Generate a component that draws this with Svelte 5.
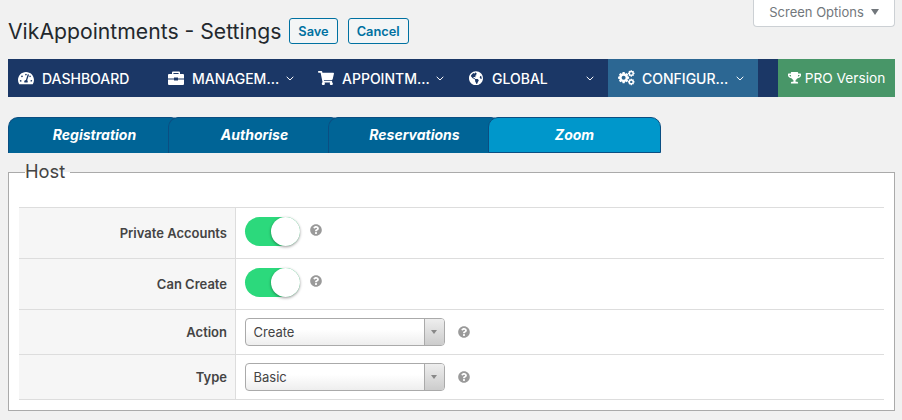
<script>
	const gear = (cx, cy, r, teeth = 8) => {
		let d = '';
		const step = (Math.PI * 2) / teeth;
		for (let i = 0; i < teeth; i++) {
			const a = i * step;
			const pts = [
				[-0.3, r * 0.78], [-0.16, r], [0.16, r], [0.3, r * 0.78]
			];
			pts.forEach(([o, rad], j) => {
				const x = cx + Math.cos(a + o * step * 1.4) * rad;
				const y = cy + Math.sin(a + o * step * 1.4) * rad;
				d += `${i === 0 && j === 0 ? 'M' : 'L'}${x.toFixed(2)} ${y.toFixed(2)}`;
			});
		}
		d += 'Z';
		const h = r * 0.36;
		d += `M${cx - h} ${cy}a${h} ${h} 0 1 0 ${h * 2} 0a${h} ${h} 0 1 0 ${-h * 2} 0Z`;
		return d;
	};

	const icons = {
		dashboard: { box: '0 0 576 512', d: 'M288 32C128.94 32 0 160.94 0 320c0 52.8 14.25 102.26 39.06 144.8 5.61 9.62 16.3 15.2 27.44 15.2h443c11.14 0 21.83-5.58 27.44-15.2C561.75 422.26 576 372.8 576 320c0-159.06-128.94-288-288-288zm0 64c14.71 0 26.58 10.13 30.32 23.65-1.11 2.26-2.64 4.23-3.45 6.67l-9.22 27.67c-5.13 3.49-10.97 6.01-17.64 6.01-17.67 0-32-14.33-32-32S270.33 96 288 96zM96 384c-17.67 0-32-14.33-32-32s14.33-32 32-32 32 14.33 32 32-14.33 32-32 32zm48-160c-17.67 0-32-14.33-32-32s14.33-32 32-32 32 14.33 32 32-14.33 32-32 32zm246.77-72.41l-61.33 184C343.13 347.33 352 364.54 352 384c0 11.72-3.38 22.55-8.88 32H232.88c-5.5-9.45-8.88-20.28-8.88-32 0-33.94 26.5-61.43 59.9-63.59l61.34-184.01c4.17-12.56 17.73-19.45 30.36-15.17 12.57 4.19 19.35 17.79 15.17 30.36zm14.66 57.2l15.52-46.55c3.47-1.29 7.13-2.23 11.05-2.23 17.67 0 32 14.33 32 32s-14.33 32-32 32c-11.38-.01-20.89-6.28-26.57-15.22zM480 384c-17.67 0-32-14.33-32-32s14.33-32 32-32 32 14.33 32 32-14.33 32-32 32z' },
		briefcase: { box: '0 0 16 14', d: 'M5 0.5h6a1 1 0 0 1 1 1V3h3a1 1 0 0 1 1 1v3.4H10V6.6H6v.8H0V4a1 1 0 0 1 1-1h3V1.5a1 1 0 0 1 1-1zM5.4 1.9V3h5.2V1.9zM0 8.4h6v1.2h4V8.4h6V13a1 1 0 0 1-1 1H1a1 1 0 0 1-1-1z' },
		cart: { box: '0 0 576 512', d: 'M528.12 301.319l47.273-208C578.806 78.301 567.391 64 551.99 64H159.208l-9.166-44.81C147.758 8.021 137.93 0 126.529 0H24C10.745 0 0 10.745 0 24v16c0 13.255 10.745 24 24 24h69.883l70.248 343.435C147.325 417.1 136 435.222 136 456c0 30.928 25.072 56 56 56s56-25.072 56-56c0-15.674-6.447-29.835-16.824-40h209.647C430.447 426.165 424 440.326 424 456c0 30.928 25.072 56 56 56s56-25.072 56-56c0-22.172-12.888-41.332-31.579-50.405l5.517-24.276c3.413-15.018-8.002-29.319-23.403-29.319H218.117l-6.545-32h293.145c11.206 0 20.92-7.754 23.403-18.681z' },
		globe: { box: '0 0 496 512', d: 'M248 8C111.03 8 0 119.03 0 256s111.03 248 248 248 248-111.03 248-248S384.97 8 248 8zm82.29 357.6c-3.9 3.88-7.99 7.95-11.31 11.28-2.99 3-5.1 6.7-6.17 10.71-1.51 5.66-2.73 11.38-4.77 16.87l-17.39 46.85c-13.76 3-28 4.69-42.65 4.69v-27.38c1.69-12.62-7.64-36.26-22.63-51.25-6-6-9.37-14.14-9.37-22.63v-32.01c0-11.64-6.27-22.34-16.46-27.97-14.37-7.95-34.81-19.06-48.81-26.11-11.48-5.78-22.1-13.14-31.65-21.75l-.8-.72a114.792 114.792 0 0 1-18.06-20.74c-9.38-13.77-24.66-36.42-34.59-51.14 20.47-45.5 57.36-82.04 103.2-101.89l24.01 12.01C203.48 89.74 216 82.01 216 70.11v-11.3c7.99-1.29 16.12-2.11 24.39-2.42l28.3 28.3c6.25 6.25 6.25 16.38 0 22.63L264 112l-10.34 10.34c-3.12 3.12-3.12 8.19 0 11.31l4.69 4.69c3.12 3.12 3.12 8.19 0 11.31l-8 8a8.008 8.008 0 0 1-5.66 2.34h-8.99c-2.08 0-4.08.81-5.58 2.27l-9.92 9.65a8.008 8.008 0 0 0-1.58 9.31l15.59 31.19c2.66 5.32-1.21 11.58-7.15 11.58h-5.64c-1.93 0-3.79-.7-5.24-1.96l-9.28-8.06a16.017 16.017 0 0 0-15.55-3.1l-31.17 10.39a11.95 11.95 0 0 0-8.17 11.34c0 4.53 2.56 8.66 6.61 10.69l11.08 5.54c9.41 4.71 19.79 7.16 30.31 7.16s22.59 27.29 32 32h66.75c8.49 0 16.62 3.37 22.63 9.37l13.69 13.69a30.503 30.503 0 0 1 8.93 21.57 46.536 46.536 0 0 1-13.72 32.98zM417 274.25c-5.79-1.45-10.84-5-14.15-9.97l-17.98-26.97a23.97 23.97 0 0 1 0-26.62l19.59-29.38c2.32-3.47 5.5-6.29 9.24-8.15l12.98-6.49C440.2 193.59 448 223.87 448 256c0 8.67-.74 17.16-1.82 25.54L417 274.25z' },
		cogs: { box: '0 0 20 18', d: gear(6.6, 9, 6.6, 8) + gear(15.6, 4, 3.9, 8) + gear(15.6, 14, 3.9, 8), rule: 'evenodd' }
	};

	const trophy = 'M552 64H448V24c0-13.3-10.7-24-24-24H152c-13.3 0-24 10.7-24 24v40H24C10.7 64 0 74.7 0 88v56c0 35.7 22.5 72.4 61.9 100.7 31.5 22.7 69.8 37.1 110 41.7C203.3 338.5 240 360 240 360v72h-48c-35.3 0-64 20.7-64 56v12c0 6.6 5.4 12 12 12h296c6.6 0 12-5.4 12-12v-12c0-35.3-28.7-56-64-56h-48v-72s36.7-21.5 68.1-73.6c40.3-4.6 78.6-19 110-41.7 39.3-28.3 61.9-65 61.9-100.7V88c0-13.3-10.7-24-24-24zM99.3 192.8C74.9 175.2 64 155.6 64 144v-16h64.2c1 32.6 5.8 61.2 12.8 86.2-15.1-5.2-29.2-12.4-41.7-21.4zM512 144c0 16.1-17.7 36.1-35.3 48.8-12.5 9-26.7 16.2-41.8 21.4 7-25 11.8-53.6 12.8-86.2H512v16z';
	const question = 'M504 256c0 136.997-111.043 248-248 248S8 392.997 8 256C8 119.083 119.043 8 256 8s248 111.083 248 248zM262.655 90c-54.497 0-89.255 22.957-116.549 63.758-3.536 5.286-2.353 12.415 2.715 16.258l34.699 26.31c5.205 3.947 12.621 3.008 16.665-2.122 17.864-22.658 30.113-35.797 57.303-35.797 20.429 0 45.698 13.148 45.698 32.958 0 14.976-12.363 22.667-32.534 33.976C247.128 238.528 216 254.941 216 296v4c0 6.627 5.373 12 12 12h56c6.627 0 12-5.373 12-12v-1.333c0-28.462 83.186-29.647 83.186-106.667 0-58.002-60.165-102-116.531-102zM256 338c-25.365 0-46 20.635-46 46 0 25.364 20.635 46 46 46s46-20.636 46-46c0-25.365-20.635-46-46-46z';

	const menu = [
		{ label: 'DASHBOARD', icon: 'dashboard', w: 16 },
		{ label: 'MANAGEM…', icon: 'briefcase', w: 16, arrow: true },
		{ label: 'APPOINTM…', icon: 'cart', w: 16, arrow: true },
		{ label: 'GLOBAL', icon: 'globe', w: 14, arrow: true },
		{ label: 'CONFIGUR…', icon: 'cogs', w: 17, arrow: true, active: true }
	];

	const tabs = ['Registration', 'Authorise', 'Reservations', 'Zoom'];

	const rows = [
		{ label: 'Private Accounts', kind: 'toggle' },
		{ label: 'Can Create', kind: 'toggle' },
		{ label: 'Action', kind: 'select', value: 'Create' },
		{ label: 'Type', kind: 'select', value: 'Basic' }
	];
</script>

{#snippet help()}
	<svg class="help" viewBox="0 0 512 512"><path d={question} /></svg>
{/snippet}

<div class="page">
	<div class="screen-row">
		<button class="screen-options">Screen Options <span class="tri"></span></button>
	</div>

	<header class="title-row">
		<h1>VikAppointments - Settings</h1>
		<button class="btn">Save</button>
		<button class="btn">Cancel</button>
	</header>

	<nav class="menu">
		{#each menu as item}
			<div class="item" class:active={item.active}>
				<span class="ico" class:nudge={item.icon === 'globe'}>
					<svg width={item.w} viewBox={icons[item.icon].box}><path fill-rule={icons[item.icon].rule} d={icons[item.icon].d} /></svg>
				</span>
				<span class="label">{item.label}</span>
				{#if item.arrow}
					<svg class="chev" viewBox="0 0 8 5"><path d="M.7.8 4 4 7.3.8" /></svg>
				{/if}
			</div>
		{/each}
		<div class="pro">
			<svg viewBox="0 0 576 512"><path d={trophy} /></svg>
			PRO Version
		</div>
	</nav>

	<div class="tabs">
		{#each tabs as tab, i}
			<div class="tab" class:current={i === 3}>{tab}</div>
		{/each}
	</div>

	<fieldset>
		<legend>Host</legend>
		<div class="table">
			{#each rows as row}
				<div class="row" class:tall={row.kind === 'toggle'}>
					<div class="key">{row.label}</div>
					<div class="val">
						{#if row.kind === 'toggle'}
							<span class="toggle"><span class="knob"></span></span>
						{:else}
							<span class="select">
								<span class="current-value">{row.value}</span>
								<span class="caret"><span class="down"></span></span>
							</span>
						{/if}
						{@render help()}
					</div>
				</div>
			{/each}
		</div>
	</fieldset>
</div>

<style>
	:global(body) {
		margin: 0;
		background: #f1f1f1;
	}

	.page {
		width: 902px;
		height: 420px;
		box-sizing: border-box;
		padding: 0 7px 0 8px;
		overflow: hidden;
		font-family: Inter, "Liberation Sans", sans-serif;
		color: #444;
	}

	.screen-row {
		display: flex;
		justify-content: flex-end;
		height: 18px;
	}

	.screen-options {
		width: 142px;
		height: 27px;
		flex: none;
		box-sizing: border-box;
		background: #fff;
		border: 1px solid #ccd0d4;
		border-top: 0;
		border-radius: 0 0 4px 4px;
		color: #72777c;
		font: 400 13px Inter, sans-serif;
		padding: 0 0 3px;
		display: flex;
		align-items: center;
		justify-content: center;
		gap: 7px;
	}

	.tri {
		border: 4px solid transparent;
		border-top: 6px solid #72777c;
		border-bottom: 0;
	}

	.title-row {
		display: flex;
		align-items: center;
		height: 26px;
		gap: 10px;
	}

	h1 {
		margin: 0 -2px 0 0;
		font-size: 21.2px;
		font-weight: 400;
		color: #23282d;
		white-space: nowrap;
	}

	.btn {
		height: 26px;
		box-sizing: border-box;
		padding: 0 8px;
		border: 1px solid #0071a1;
		border-radius: 3px;
		background: #f3f5f6;
		color: #0071a1;
		font: 600 12.8px Inter, sans-serif;
	}

	.menu {
		display: flex;
		height: 38px;
		margin-top: 15px;
		background: #1b3766;
		color: #fff;
	}

	.item {
		width: 150px;
		box-sizing: border-box;
		padding: 0 14px 0 10px;
		display: flex;
		align-items: center;
		font-size: 14px;
		font-weight: 500;
	}

	.item.active {
		background: #2c6793;
	}

	.ico {
		width: 24px;
		flex: none;
		display: flex;
	}

	.ico.nudge {
		padding-left: 1px;
		width: 23px;
	}

	.ico svg {
		fill: #fff;
		display: block;
	}

	.label {
		flex: 1;
		white-space: nowrap;
	}

	.chev {
		width: 8px;
		height: 5px;
		fill: none;
		stroke: #fff;
		stroke-width: 1;
	}

	.pro {
		margin-left: auto;
		width: 117px;
		background: #489668;
		display: flex;
		align-items: center;
		justify-content: center;
		gap: 4px;
		font-size: 13.7px;
		color: #fff;
	}

	.pro svg {
		width: 13px;
		fill: #fff;
	}

	.tabs {
		display: flex;
		margin-top: 20px;
		height: 36px;
	}

	.tab {
		width: 173px;
		flex: none;
		box-sizing: border-box;
		background: #006496;
		color: #fff;
		border: 1px solid #0a4e82;
		border-bottom: 0;
		border-radius: 10px 10px 0 0;
		display: flex;
		align-items: center;
		justify-content: center;
		padding-bottom: 2px;
		font-size: 14px;
		font-weight: 700;
		font-style: italic;
	}

	.tab + .tab {
		margin-left: -13px;
	}

	.tab.current {
		background: #0097cb;
		border-bottom: 1px solid #0a4e82;
		padding-bottom: 1px;
	}

	fieldset {
		margin: 8px 0 0;
		padding: 23px 10px 10px;
		background: #fff;
		border: 1px solid #aaa;
		min-width: 0;
	}

	legend {
		margin-left: 6px;
		padding: 0 5px 2px 0;
		font-size: 18.3px;
		line-height: 21px;
		color: #444;
	}

	.table {
		border-top: 1px solid #ddd;
	}

	.row {
		display: flex;
		height: 45px;
		border-bottom: 1px solid #ddd;
		box-sizing: border-box;
	}

	.row.tall {
		height: 51px;
	}

	.key {
		width: 217px;
		box-sizing: border-box;
		background: #f6f6f6;
		border-right: 1px solid #ddd;
		padding-right: 8px;
		display: flex;
		align-items: center;
		justify-content: flex-end;
		font-size: 13px;
		font-weight: 600;
		color: #444;
	}

	.val {
		display: flex;
		align-items: center;
		padding-left: 8.5px;
		font-size: 13px;
	}

	.toggle {
		width: 55px;
		height: 29px;
		margin-bottom: 4px;
		box-sizing: border-box;
		border-radius: 15px;
		background: #2cd97c;
		display: flex;
		justify-content: flex-end;
	}

	.knob {
		width: 29px;
		height: 29px;
		border-radius: 50%;
		background: #fff;
		box-shadow: 0 1px 3px rgba(0, 0, 0, 0.4);
	}

	.help {
		width: 12px;
		height: 12px;
		fill: #9a9a9a;
		margin-left: 10px;
		margin-bottom: 6px;
	}

	.select {
		width: 200px;
		height: 28px;
		box-sizing: border-box;
		border: 1px solid #aaa;
		border-radius: 4px;
		background: linear-gradient(#fff 40%, #eee);
		display: flex;
		align-items: center;
		color: #444;
		overflow: hidden;
	}

	.current-value {
		flex: 1;
		padding-left: 8px;
	}

	.caret {
		width: 19px;
		height: 100%;
		background: linear-gradient(#eee, #ccc);
		border-left: 1px solid #aaa;
		display: flex;
		align-items: center;
		justify-content: center;
	}

	.down {
		border: 3px solid transparent;
		border-top: 4px solid #888;
		border-bottom: 0;
	}

	.select + .help {
		margin-left: 13px;
		margin-bottom: 0;
	}
</style>
